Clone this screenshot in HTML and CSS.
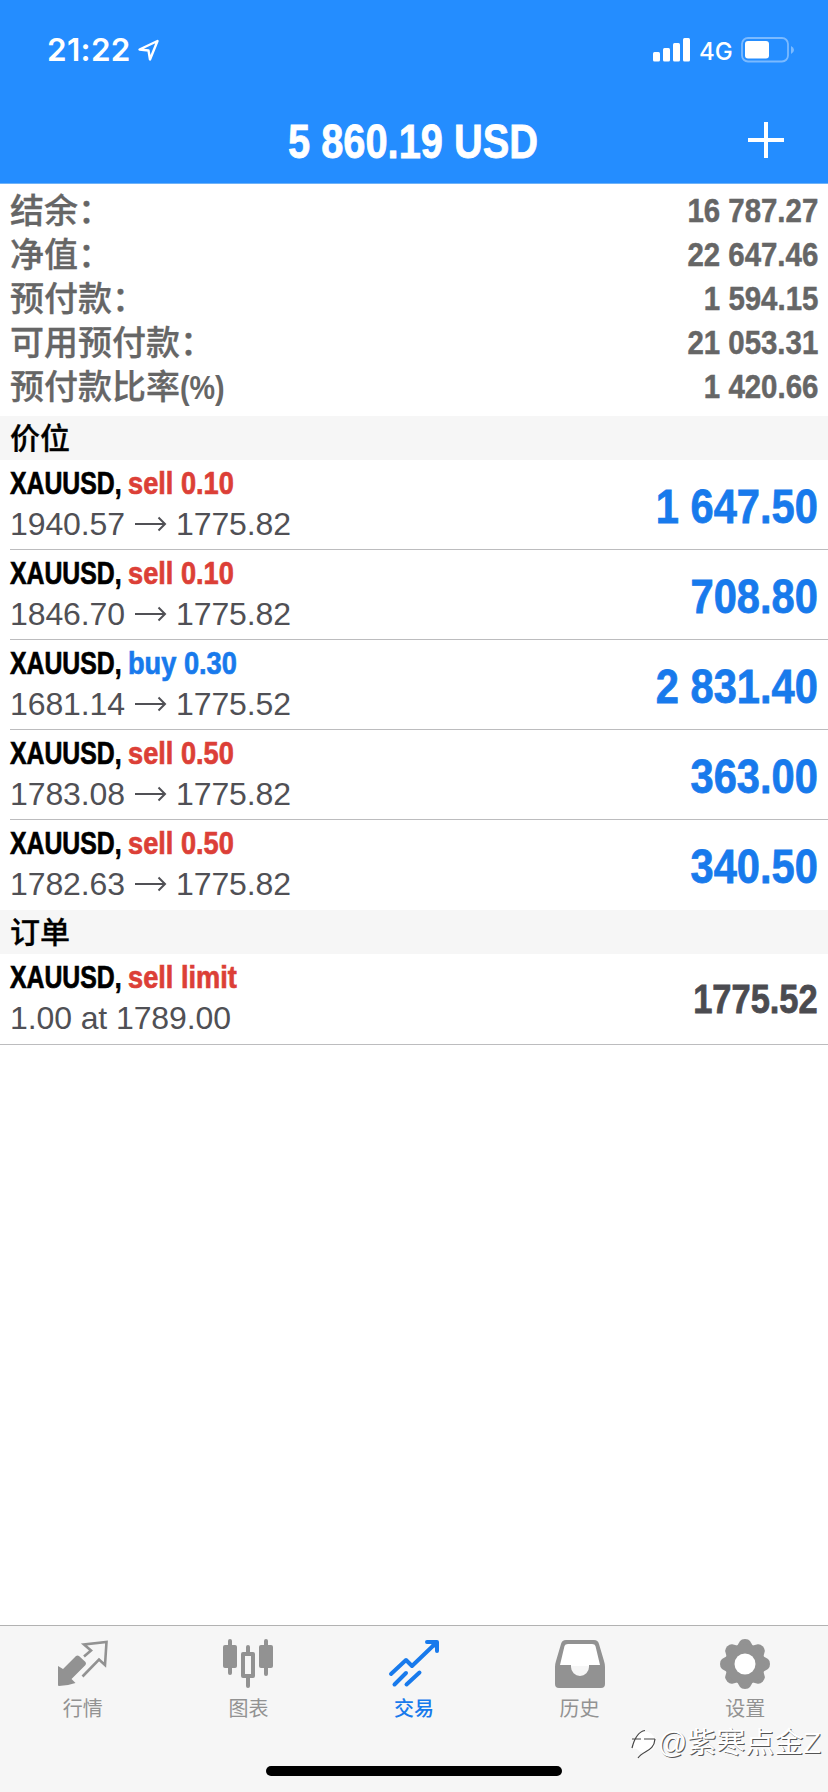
FILE: index.html
```html
<!DOCTYPE html>
<html lang="zh-CN">
<head>
<meta charset="utf-8">
<title>交易</title>
<link rel="stylesheet" href="styles.css">
</head>
<body>
<div class="app">
  <header class="header">
    <div class="status">
      <span class="time">21:22</span>
      <svg class="location" width="22" height="22" viewBox="0 0 22 22"><path d="M1.500 10.500 19.500 2 12 20.500 10.500 11.500z" fill="none" stroke="#fff" stroke-width="2.400" stroke-linejoin="round"/></svg>
      <svg class="signal" width="38" height="24" viewBox="0 0 38 24" fill="#fff"><rect x="0" y="14" width="7" height="9.500" rx="1.500"/><rect x="10" y="10" width="7" height="13.500" rx="1.500"/><rect x="20" y="5" width="7" height="18.500" rx="1.500"/><rect x="30" y="0" width="7" height="23.500" rx="1.500"/></svg>
      <span class="network">4G</span>
      <svg class="battery" width="54" height="26" viewBox="0 0 54 26"><rect x="1" y="1" width="46" height="23.500" rx="6" fill="none" stroke="#7bbaff" stroke-width="1.800"/><rect x="4" y="4" width="24" height="17.500" rx="3" fill="#fff"/><path d="M50 9v8q3-1.500 3-4t-3-4z" fill="#7bbaff"/></svg>
    </div>
    <div class="nav">
      <h1 class="title">5 860.19 USD</h1>
      <svg class="add" width="36" height="36" viewBox="0 0 36 36"><path d="M18 0v36M0 18h36" stroke="#fff" stroke-width="4"/></svg>
    </div>
  </header>

  <main class="content">
    <section class="summary">
      <div class="line"><span>结余：</span><b class="value">16 787.27</b></div>
      <div class="line"><span>净值：</span><b class="value">22 647.46</b></div>
      <div class="line"><span>预付款：</span><b class="value">1 594.15</b></div>
      <div class="line"><span>可用预付款：</span><b class="value">21 053.31</b></div>
      <div class="line"><span>预付款比率<span class="percent">(%)</span></span><b class="value">1 420.66</b></div>
    </section>

    <h2 class="section">价位</h2>
    <div class="positions">
      <div class="row"><div><div class="name"><b class="symbol">XAUUSD,</b><b class="side sell">sell 0.10</b></div><div class="prices">1940.57<svg class="arrow" viewBox="0 0 32 16"><path d="M0 8h30M23.500 1.500 30 8l-6.500 6.500"/></svg>1775.82</div></div><b class="profit">1 647.50</b></div>
      <div class="row"><div><div class="name"><b class="symbol">XAUUSD,</b><b class="side sell">sell 0.10</b></div><div class="prices">1846.70<svg class="arrow" viewBox="0 0 32 16"><path d="M0 8h30M23.500 1.500 30 8l-6.500 6.500"/></svg>1775.82</div></div><b class="profit">708.80</b></div>
      <div class="row"><div><div class="name"><b class="symbol">XAUUSD,</b><b class="side buy">buy 0.30</b></div><div class="prices">1681.14<svg class="arrow" viewBox="0 0 32 16"><path d="M0 8h30M23.500 1.500 30 8l-6.500 6.500"/></svg>1775.52</div></div><b class="profit">2 831.40</b></div>
      <div class="row"><div><div class="name"><b class="symbol">XAUUSD,</b><b class="side sell">sell 0.50</b></div><div class="prices">1783.08<svg class="arrow" viewBox="0 0 32 16"><path d="M0 8h30M23.500 1.500 30 8l-6.500 6.500"/></svg>1775.82</div></div><b class="profit">363.00</b></div>
      <div class="row"><div><div class="name"><b class="symbol">XAUUSD,</b><b class="side sell">sell 0.50</b></div><div class="prices">1782.63<svg class="arrow" viewBox="0 0 32 16"><path d="M0 8h30M23.500 1.500 30 8l-6.500 6.500"/></svg>1775.82</div></div><b class="profit">340.50</b></div>
    </div>

    <h2 class="section">订单</h2>
    <div class="orders">
      <div class="row"><div><div class="name"><b class="symbol">XAUUSD,</b><b class="side sell">sell limit</b></div><div class="prices">1.00 at 1789.00</div></div><b class="quote">1775.52</b></div>
    </div>
  </main>

  <nav class="tabs">
    <div class="tab">
      <svg width="52" height="52" viewBox="0 0 52 52"><path d="M1 28 6 31 19 18q1.500-1 3 0l6.500 6q1 1.500 0 3L14.500 41l4 4Q10 48 2 48q-1 0-1-1z" fill="#929292"/><path d="M27 18.500 34 12.500 27 6.500 49.500 4 48 27 42 21.500 25.500 38.500" fill="none" stroke="#929292" stroke-width="2.600"/></svg>
      <span>行情</span>
    </div>
    <div class="tab">
      <svg width="52" height="52" viewBox="0 0 52 52"><g fill="#929292"><rect x="6" y="1" width="4" height="36" rx="2"/><rect x="1" y="7" width="14" height="23" rx="2"/><rect x="42" y="1" width="4" height="37" rx="2"/><rect x="37" y="7" width="14" height="23" rx="2"/><rect x="24" y="7" width="4" height="10" rx="2"/><rect x="24" y="38" width="4" height="12" rx="2"/></g><rect x="21" y="16" width="10" height="22" fill="none" stroke="#929292" stroke-width="4" stroke-linejoin="round"/></svg>
      <span>图表</span>
    </div>
    <div class="tab active">
      <svg width="52" height="52" viewBox="0 0 52 52" fill="none" stroke="#187aec" stroke-width="4" stroke-linecap="round" stroke-linejoin="round"><path d="M3 36 18 22l6 6L48 5M6.500 46.500 18 35M18.500 46.500l13-12M39 4h10v9"/><path d="m42 4h7v7z" fill="#187aec" stroke-width="1"/></svg>
      <span>交易</span>
    </div>
    <div class="tab">
      <svg width="52" height="52" viewBox="0 0 52 52"><path fill="#fff" d="M11 4h29l7 24H5z"/><path fill-rule="evenodd" fill="#929292" d="M12 2h28q4 0 5 4l5 17q1 3 1 6v17q0 4-4 4H5q-4 0-4-4V29q0-3 1-6L7 6q1-4 5-4zM14 6q-3 0-3.500 2L6 27h11v2a9 9 0 0 0 18 0v-2h11L41.500 8Q41 6 38 6z"/></svg>
      <span>历史</span>
    </div>
    <div class="tab">
      <svg width="52" height="52" viewBox="0 0 52 52"><g fill="#929292"><g id="teeth"><path id="tooth" d="M17.500 9 21 3q1.500-2 5-2t5 2l3.500 6v34l-3.500 6q-1.500 2-5 2t-5-2l-3.500-6z"/><use href="#tooth" transform="rotate(45 26 26)"/></g><use href="#teeth" transform="rotate(90 26 26)"/><circle cx="26" cy="26" r="20"/></g><circle cx="26" cy="26" r="10.500" fill="#fff"/></svg>
      <span>设置</span>
    </div>
    <div class="home"></div>
    <div class="watermark"><svg width="28" height="36" viewBox="0 0 28 36"><path d="M4 15C8 4 23 4 25 15S17 28 10 27Q6 22 3 24z" fill="#fff"/><path d="M2 23Q6 7 15 5.500M2 14h9M14 14h11M25 14C24 27 13 25 8 33" fill="none" stroke="#444" stroke-width="1.200"/></svg><span>@紫寒点金Z</span></div>
  </nav>
</div>
</body>
</html>
```
FILE: styles.css
```css
* { box-sizing: border-box; }
body {
  margin: 0;
  background: #fff;
  font-family: "Liberation Sans", "Noto Sans CJK SC", sans-serif;
}
.app { display: flex; flex-direction: column; width: 828px; height: 1792px; overflow: hidden; }
h1, h2 { margin: 0; }
svg { display: block; flex: none; }

.header { height: 184px; background: #248dff; border-bottom: 1px solid #6fb3f8; color: #fff; }
.status { display: flex; align-items: center; height: 100px; padding: 0 33px 0 47px; }
.time { width: 82px; font: 600 31.500px/40px Inter, sans-serif; letter-spacing: .3px; white-space: nowrap; }
.location { margin-left: 9px; }
.signal { margin-left: auto; }
.network { width: 34px; margin: 3px 8px 0 8px; font: 500 24px/30px Inter, sans-serif; }
.nav { display: grid; grid-template-columns: 1fr 249px 1fr; align-items: center; height: 80px; padding: 0 44px 0 0; }
.title { grid-column: 2; margin-left: 20px; padding-top: 3px; font-size: 48px; line-height: 56px; white-space: nowrap; transform: scaleX(.829); transform-origin: left; -webkit-text-stroke: .8px; }
.add { justify-self: end; }

.content { flex: 1; }
.summary { height: 232px; padding: 5px 10px 0; color: #666; }
.line { display: flex; justify-content: space-between; height: 44px; font-size: 34px; font-weight: 500; line-height: 44px; -webkit-text-stroke: .3px; }
.percent { display: inline-block; font-size: 33px; font-weight: 700; transform: scaleX(.87); transform-origin: left; -webkit-text-stroke: 0; }
.value { margin-top: -1px; font-size: 34px; transform: scaleX(.865); transform-origin: right; -webkit-text-stroke: .5px; }

.section { height: 44px; padding: 0 10px; background: #f6f6f6; color: #000; font-size: 30px; font-weight: 500; line-height: 45px; -webkit-text-stroke: .3px; }
.row { display: flex; justify-content: space-between; height: 90px; padding-right: 10px; border-bottom: 1px solid #bcbcbe; }
.positions { padding-left: 10px; }
.positions .row:last-child { border-bottom: 0; }
.orders .row { height: 91px; padding-left: 10px; }
.name { display: flex; height: 42px; font-size: 32px; line-height: 47px; white-space: nowrap; -webkit-text-stroke: .7px; }
.symbol, .side { transform-origin: left; }
.symbol { width: 118px; color: #000; transform: scaleX(.775); }
.side { transform: scaleX(.85); }
.sell { color: #dc3f37; }
.buy { color: #187aec; }
.prices { display: flex; align-items: center; height: 44px; color: #505055; font-size: 32px; letter-spacing: -.1px; white-space: pre; }
.arrow { width: 32px; height: 16px; margin: 0 9px 0 10px; fill: none; stroke: #505055; stroke-width: 2; }
.profit, .quote { align-self: center; padding-top: 3px; white-space: nowrap; transform-origin: right; -webkit-text-stroke: .8px; }
.profit { color: #187aec; font-size: 48px; transform: scaleX(.867); }
.quote { padding-top: 1px; color: #4b4b50; font-size: 40px; transform: scaleX(.86); }

.tabs { position: relative; display: grid; grid-template-columns: repeat(5, 1fr); height: 167px; padding-top: 12px; background: #f6f6f6; border-top: 1px solid #b2b2b2; }
.tab { display: flex; flex-direction: column; align-items: center; color: #929292; font-size: 20px; line-height: 30px; }
.tab span { margin-top: 4px; }
.active { color: #187aec; }
.active span { font-weight: 500; }
.home { position: absolute; left: 266px; bottom: 16px; width: 296px; height: 10px; border-radius: 5px; background: #000; }
.watermark { position: absolute; right: 7px; bottom: 29px; display: flex; align-items: center; color: #fff; font-size: 29px; line-height: 40px; text-shadow: 1px 1px 0 #555; }
```
